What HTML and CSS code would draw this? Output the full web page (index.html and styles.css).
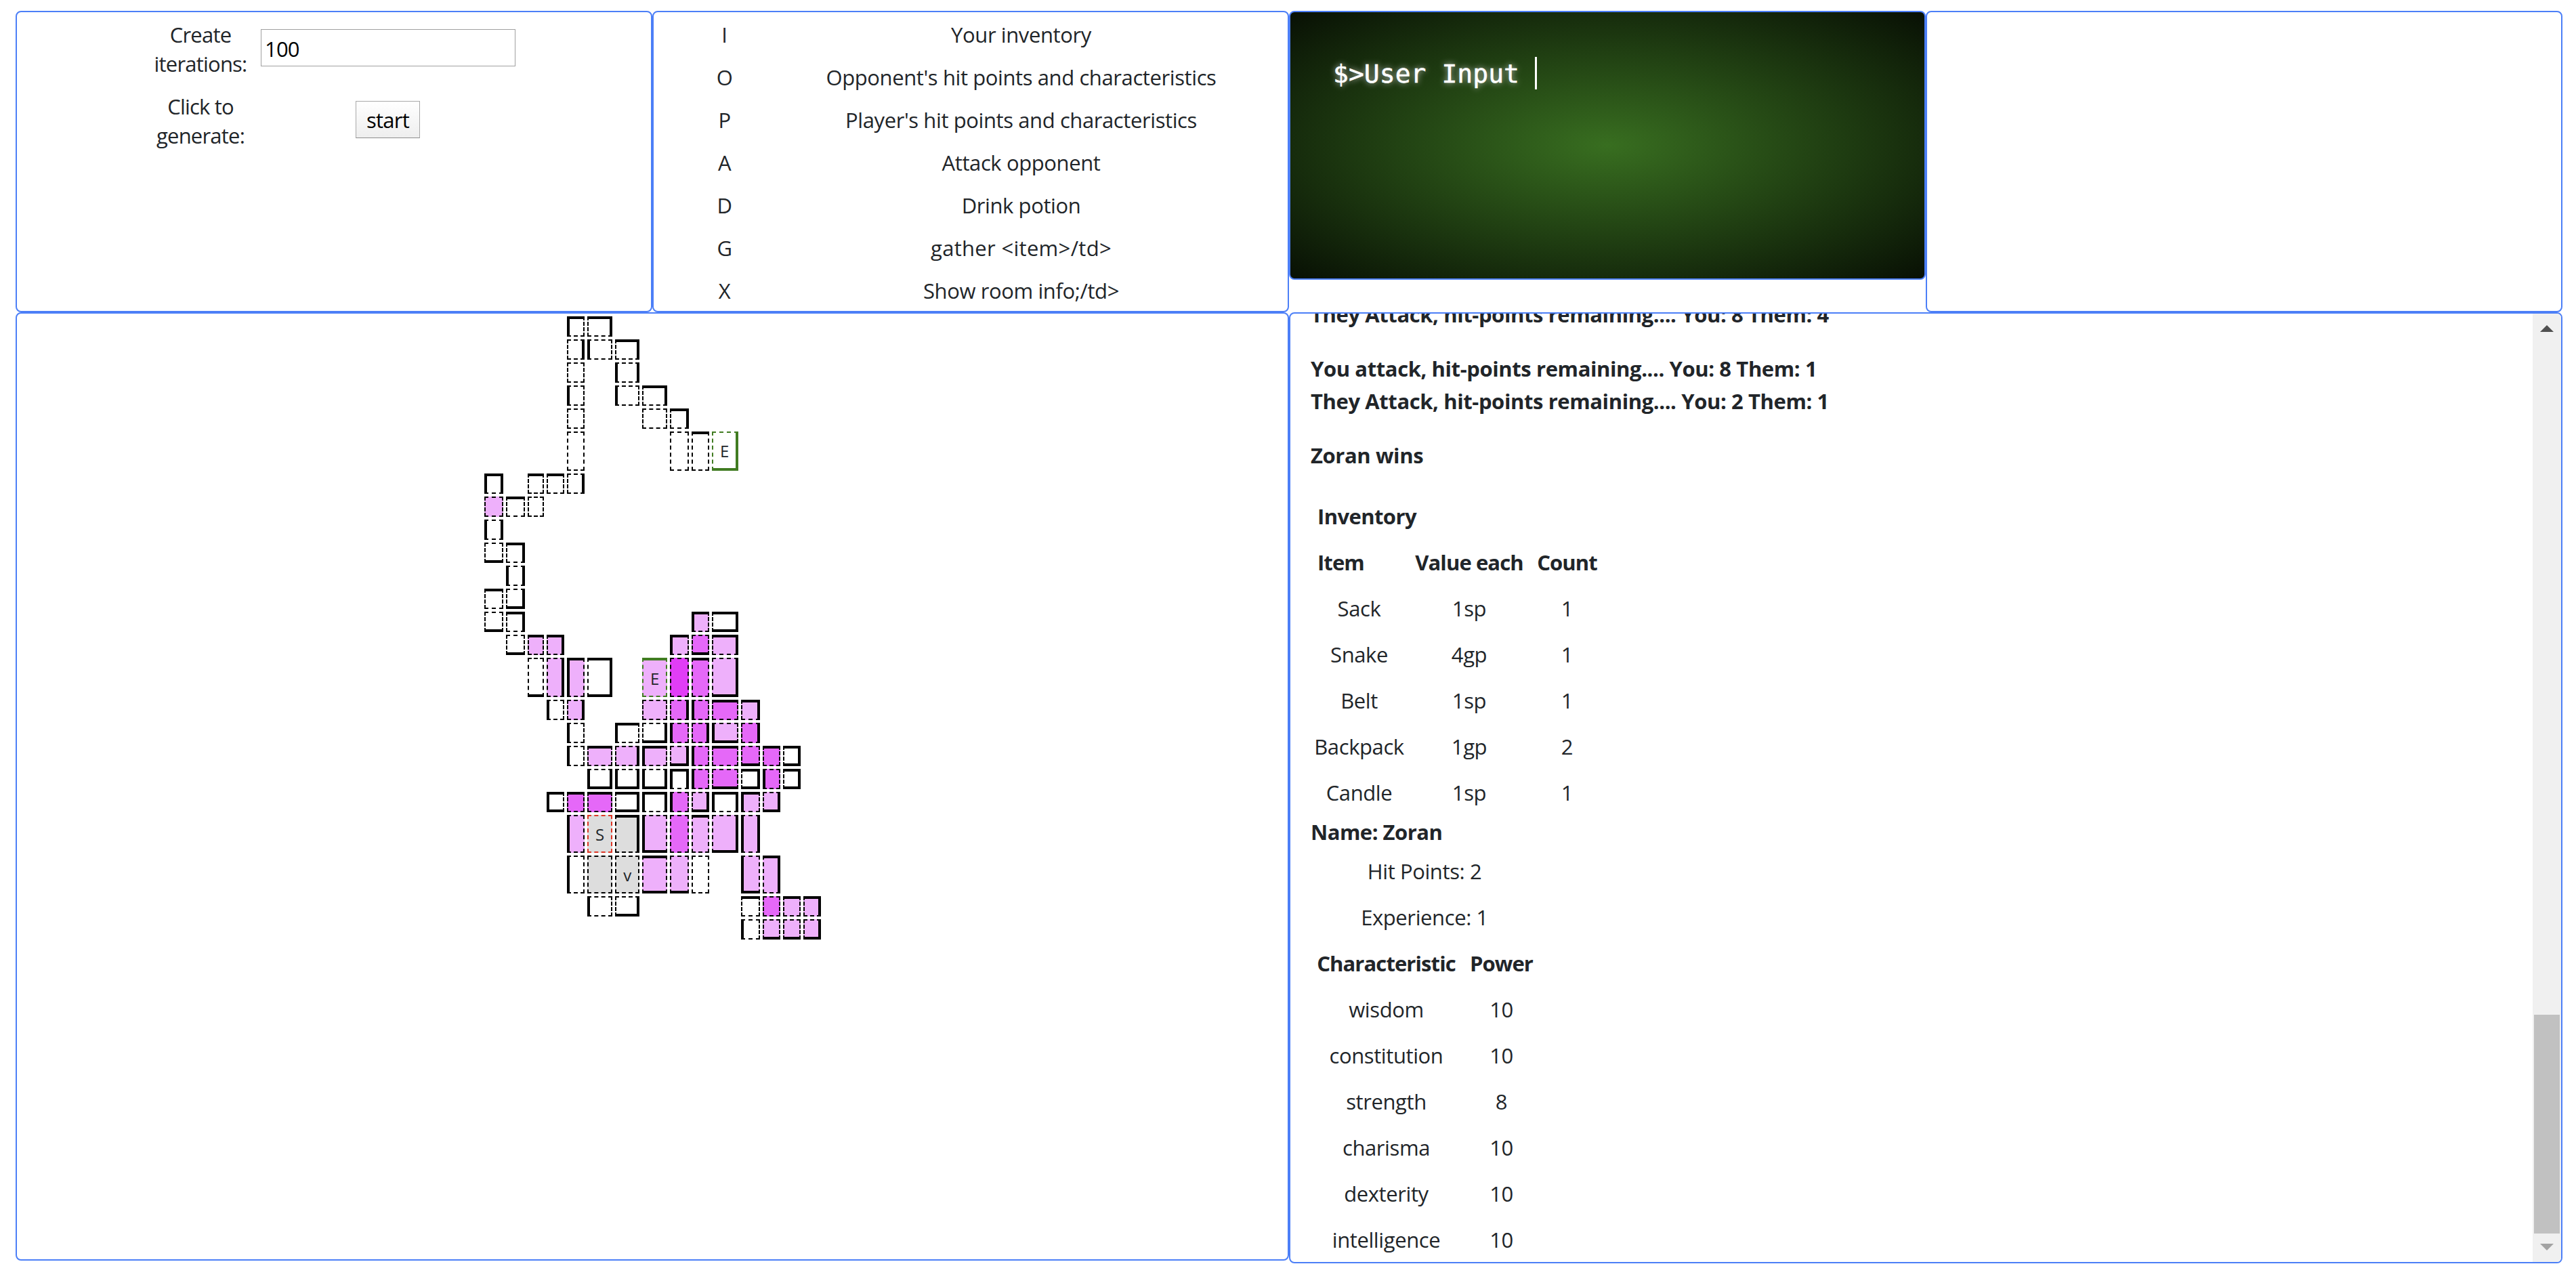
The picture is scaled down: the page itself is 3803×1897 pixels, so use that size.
FILE: index.html
```html
<!DOCTYPE html>
<html lang="en">
<head>
<meta charset="utf-8">
<title>Dungeon</title>
<link rel="stylesheet" href="styles.css">
</head>
<body>
<main class="board">
  <section class="top">
    <div class="panel controls">
      <div class="form">
        <label class="label" for="iterations">Create<br>iterations:</label>
        <input class="field" id="iterations" type="text" value="100">
        <span class="label">Click to<br>generate:</span>
        <button class="start">start</button>
      </div>
    </div>
    <div class="panel">
      <div class="keys">
        <span>I</span><span>Your inventory</span>
        <span>O</span><span>Opponent's hit points and characteristics</span>
        <span>P</span><span>Player's hit points and characteristics</span>
        <span>A</span><span>Attack opponent</span>
        <span>D</span><span>Drink potion</span>
        <span>G</span><span class="loose">gather &lt;item&gt;/td&gt;</span>
        <span>X</span><span>Show room info;/td&gt;</span>
      </div>
    </div>
    <div class="panel terminal"><span class="prompt">$&gt;User Input </span><span class="caret"></span></div>
    <div class="panel"></div>
  </section>
  <section class="bottom">
    <div class="panel map-panel">
      <div class="map">
        <i class="n w" style="grid-area:1/5"></i><i class="n e" style="grid-area:1/6"></i>

        <i class="e" style="grid-area:2/5"></i><i class="w" style="grid-area:2/6"></i><i class="n e" style="grid-area:2/7"></i>

        <i style="grid-area:3/5"></i><i class="e w" style="grid-area:3/7"></i>

        <i class="w" style="grid-area:4/5"></i><i class="w" style="grid-area:4/7"></i><i class="n e" style="grid-area:4/8"></i>

        <i style="grid-area:5/5"></i><i style="grid-area:5/8"></i><i class="n e" style="grid-area:5/9"></i>

        <i style="grid-area:6/5"></i><i style="grid-area:6/9"></i><i class="n" style="grid-area:6/10"></i><i class="exit e s" style="grid-area:6/11">E</i>

        <i class="n e w" style="grid-area:7/1"></i><i class="n" style="grid-area:7/3"></i><i class="n" style="grid-area:7/4"></i><i class="e" style="grid-area:7/5"></i>

        <i class="p1" style="grid-area:8/1"></i><i class="n" style="grid-area:8/2"></i><i style="grid-area:8/3"></i>

        <i class="e w" style="grid-area:9/1"></i>

        <i class="s" style="grid-area:10/1"></i><i class="n e" style="grid-area:10/2"></i>

        <i class="e w" style="grid-area:11/2"></i>

        <i class="n" style="grid-area:12/1"></i><i class="e s" style="grid-area:12/2"></i>

        <i class="s" style="grid-area:13/1"></i><i class="n e" style="grid-area:13/2"></i><i class="p1 n w" style="grid-area:13/10"></i><i class="n e s" style="grid-area:13/11"></i>

        <i class="s" style="grid-area:14/2"></i><i class="p1 n" style="grid-area:14/3"></i><i class="p1 n e" style="grid-area:14/4"></i><i class="p1 n w" style="grid-area:14/9"></i><i class="p2 s" style="grid-area:14/10"></i><i class="p1 n e" style="grid-area:14/11"></i>

        <i class="s" style="grid-area:15/3"></i><i class="p1 e" style="grid-area:15/4"></i><i class="p1 n w" style="grid-area:15/5"></i><i class="n e s" style="grid-area:15/6"></i><i class="p1 exit n" style="grid-area:15/8">E</i><i class="p3" style="grid-area:15/9"></i><i class="p2 n" style="grid-area:15/10"></i><i class="p1 e s" style="grid-area:15/11"></i>

        <i class="w" style="grid-area:16/4"></i><i class="p1 e" style="grid-area:16/5"></i><i class="p1" style="grid-area:16/8"></i><i class="p2 e" style="grid-area:16/9"></i><i class="p2 w" style="grid-area:16/10"></i><i class="p2 n" style="grid-area:16/11"></i><i class="p1 n e" style="grid-area:16/12"></i>

        <i class="w" style="grid-area:17/5"></i><i class="n w" style="grid-area:17/7"></i><i class="e s" style="grid-area:17/8"></i><i class="p2 w" style="grid-area:17/9"></i><i class="p2 e" style="grid-area:17/10"></i><i class="p1 s w" style="grid-area:17/11"></i><i class="p2 e" style="grid-area:17/12"></i>

        <i class="w" style="grid-area:18/5"></i><i class="p1 n" style="grid-area:18/6"></i><i class="p1 e" style="grid-area:18/7"></i><i class="p1 n w" style="grid-area:18/8"></i><i class="p1 e s" style="grid-area:18/9"></i><i class="p2 w" style="grid-area:18/10"></i><i class="p2 n" style="grid-area:18/11"></i><i class="p2 s" style="grid-area:18/12"></i><i class="p2 n" style="grid-area:18/13"></i><i class="n e s" style="grid-area:18/14"></i>

        <i class="e s w" style="grid-area:19/6"></i><i class="e s w" style="grid-area:19/7"></i><i class="e s w" style="grid-area:19/8"></i><i class="n e w" style="grid-area:19/9"></i><i class="p2 w" style="grid-area:19/10"></i><i class="p2 s" style="grid-area:19/11"></i><i class="n e s" style="grid-area:19/12"></i><i class="p2 w" style="grid-area:19/13"></i><i class="n e s" style="grid-area:19/14"></i>

        <i class="n s w" style="grid-area:20/4"></i><i class="p2 n" style="grid-area:20/5"></i><i class="p2 n" style="grid-area:20/6"></i><i class="n e s" style="grid-area:20/7"></i><i class="n e w" style="grid-area:20/8"></i><i class="p2 w" style="grid-area:20/9"></i><i class="p1 e s" style="grid-area:20/10"></i><i class="n e w" style="grid-area:20/11"></i><i class="p1 n w" style="grid-area:20/12"></i><i class="p1 e s" style="grid-area:20/13"></i>

        <i class="p1 w" style="grid-area:21/5"></i><i class="seen entry" style="grid-area:21/6">S</i><i class="seen n e" style="grid-area:21/7"></i><i class="p1 s w" style="grid-area:21/8"></i><i class="p2" style="grid-area:21/9"></i><i class="p1 n" style="grid-area:21/10"></i><i class="p1 e s" style="grid-area:21/11"></i><i class="p1 e w" style="grid-area:21/12"></i>

        <i class="w" style="grid-area:22/5"></i><i class="seen" style="grid-area:22/6"></i><i class="seen" style="grid-area:22/7">v</i><i class="p1 n s" style="grid-area:22/8"></i><i class="p1 s" style="grid-area:22/9"></i><i style="grid-area:22/10"></i><i class="p1 s w" style="grid-area:22/12"></i><i class="p1 n e" style="grid-area:22/13"></i>

        <i class="w" style="grid-area:23/6"></i><i class="e s" style="grid-area:23/7"></i><i class="n" style="grid-area:23/12"></i><i class="p2" style="grid-area:23/13"></i><i class="p1 n" style="grid-area:23/14"></i><i class="p1 n e" style="grid-area:23/15"></i>

        <i class="w" style="grid-area:24/12"></i><i class="p1 s" style="grid-area:24/13"></i><i class="p1 s" style="grid-area:24/14"></i><i class="p1 e s" style="grid-area:24/15"></i>
      </div>
    </div>
    <div class="panel log-panel">
      <div class="log">
        <p class="round">They Attack, hit-points remaining.... You: 8 Them: 4</p>
        <p class="round">You attack, hit-points remaining.... You: 8 Them: 1<br>They Attack, hit-points remaining.... You: 2 Them: 1</p>
        <p class="round">Zoran wins</p>
        <h2 class="caption">Inventory</h2>
        <div class="items">
          <b class="first">Item</b><b>Value each</b><b>Count</b>
          <span>Sack</span><span>1sp</span><span>1</span>
          <span>Snake</span><span>4gp</span><span>1</span>
          <span>Belt</span><span>1sp</span><span>1</span>
          <span>Backpack</span><span>1gp</span><span>2</span>
          <span>Candle</span><span>1sp</span><span>1</span>
        </div>
        <p class="name">Name: Zoran</p>
        <div class="stats">
          <span class="wide">Hit Points: 2</span>
          <span class="wide">Experience: 1</span>
          <b>Characteristic</b><b>Power</b>
          <span>wisdom</span><span>10</span>
          <span>constitution</span><span>10</span>
          <span>strength</span><span>8</span>
          <span>charisma</span><span>10</span>
          <span>dexterity</span><span>10</span>
          <span>intelligence</span><span>10</span>
        </div>
      </div>
      <div class="scrollbar">
        <svg class="arrow" viewBox="0 0 20 10"><path d="M0 10L10 0L20 10z" fill="#505050"/></svg>
        <div class="thumb"></div>
        <svg class="arrow" viewBox="0 0 20 10"><path d="M0 0L10 10L20 0z" fill="#a3a3a3"/></svg>
      </div>
    </div>
  </section>
</main>
</body>
</html>
```
FILE: styles.css
```css
* { box-sizing: border-box; }

body {
  margin: 0;
  background: #fff;
  color: #212529;
  font: 31px/43px "Open Sans", "Noto Sans", sans-serif;
  letter-spacing: -0.4px;
}

p, h2 { margin: 0; }

.board {
  width: 3760px;
  margin: 16px 0 0 23px;
}

.panel {
  border: 2px solid #4c7ff7;
  border-radius: 8px;
  overflow: hidden;
}

.top {
  display: grid;
  grid-template-columns: repeat(4, 1fr);
  height: 445px;
}

.bottom {
  display: grid;
  grid-template-columns: repeat(2, 1fr);
  align-items: start;
}

/* generator form */
.form {
  display: grid;
  grid-template-columns: 138px 376px;
  column-gap: 20px;
  row-gap: 20px;
  padding: 12px 0 0 202px;
  text-align: center;
}

.label { letter-spacing: -0.8px; }

.field {
  height: 55px;
  margin-top: 13px;
  padding: 2px 5px 0;
  border: 1px solid #a0a0a0;
  background: #fff;
  color: #000;
  font: inherit;
  letter-spacing: -0.8px;
}

.start {
  justify-self: center;
  width: 95px;
  height: 55px;
  margin: 13px 1px 0 0;
  padding: 2px 0 0;
  border: 1px solid #a9a9a9;
  border-bottom-color: #8c8c8c;
  background: linear-gradient(#fff, #eee);
  color: #000;
  font: inherit;
  line-height: 51px;
  letter-spacing: -0.8px;
}

/* key bindings */
.keys {
  display: grid;
  grid-template-columns: 209px 667px;
  grid-auto-rows: 63px;
  padding-top: 12px;
  text-align: center;
}

.loose { letter-spacing: 0.3px; }

/* terminal */
.terminal {
  display: flex;
  height: 397px;
  padding: 66px 0 0 63px;
  background: radial-gradient(#386e20, #081004);
  color: #fff;
  font: 38px/48px "DejaVu Sans Mono", monospace;
  letter-spacing: 0.04px;
}

.prompt {
  padding-top: 1px;
  white-space: pre;
  text-shadow: 0 0 10px #c8c8c8;
  -webkit-text-stroke: 0.5px #fff;
}

.caret {
  width: 3px;
  height: 48px;
  background: #fff;
}

/* dungeon map */
.map-panel {
  height: 1400px;
  padding: 4px 0 0 690px;
}

.map {
  display: grid;
  grid-template-columns: 28px 28px 24px 26px 26px 37px 36px 37px 28px 26px 39px 28px 26px 26px 26px;
  grid-template-rows: repeat(5, 30px) 58px repeat(8, 30px) 58px repeat(5, 30px) 56px 56px 30px 30px;
  gap: 4px;
}

.map i {
  display: flex;
  align-items: center;
  justify-content: center;
  min-width: 0;
  padding-top: 2px;
  border: 2px dashed #000;
  font-size: 24px;
  font-style: normal;
  line-height: 24px;
}

.map .n { border-top: 4px solid; }
.map .e { border-right: 4px solid; }
.map .s { border-bottom: 4px solid; }
.map .w { border-left: 4px solid; }
.map .n, .map .e, .map .s, .map .w { border-color: #000; }
.map .exit { border-color: #417c22; }
.map .entry { border-color: #de3626; }
.map .p1 { background: #eeb0fb; }
.map .p2 { background: #e568f8; }
.map .p3 { background: #e13df6; }
.map .seen { background: #ddd; }

/* message log */
.log-panel {
  display: flex;
  justify-content: space-between;
  height: 1404px;
}

.log {
  margin-top: -23px;
  padding-left: 30px;
  line-height: 48px;
}

.round {
  margin-bottom: 32px;
  font-weight: 700;
}

.caption {
  padding: 4px 10px 0;
  margin-top: 38px;
  font-size: 31px;
  font-weight: 700;
  letter-spacing: -0.6px;
  line-height: 48px;
}

.items, .stats {
  display: grid;
  grid-auto-rows: 68px;
  line-height: 68px;
  text-align: center;
}

.items { grid-template-columns: 143px 182px 107px; margin-top: 10px; }
.stats { grid-template-columns: 223px 117px; }
.items b, .stats b { letter-spacing: -0.9px; white-space: nowrap; }
.items .first { padding-left: 10px; text-align: left; }
.stats .wide { grid-column: 1 / 3; width: 336px; }

.name {
  font-weight: 700;
  letter-spacing: -0.5px;
}

.scrollbar {
  display: flex;
  flex-direction: column;
  align-items: center;
  width: 42px;
  padding: 17px 0;
  background: #f0f0f0;
}

.arrow { width: 20px; height: 10px; }
.thumb {
  width: 38px;
  height: 323px;
  margin: auto 0 15px;
  background: #c1c1c1;
}
```
